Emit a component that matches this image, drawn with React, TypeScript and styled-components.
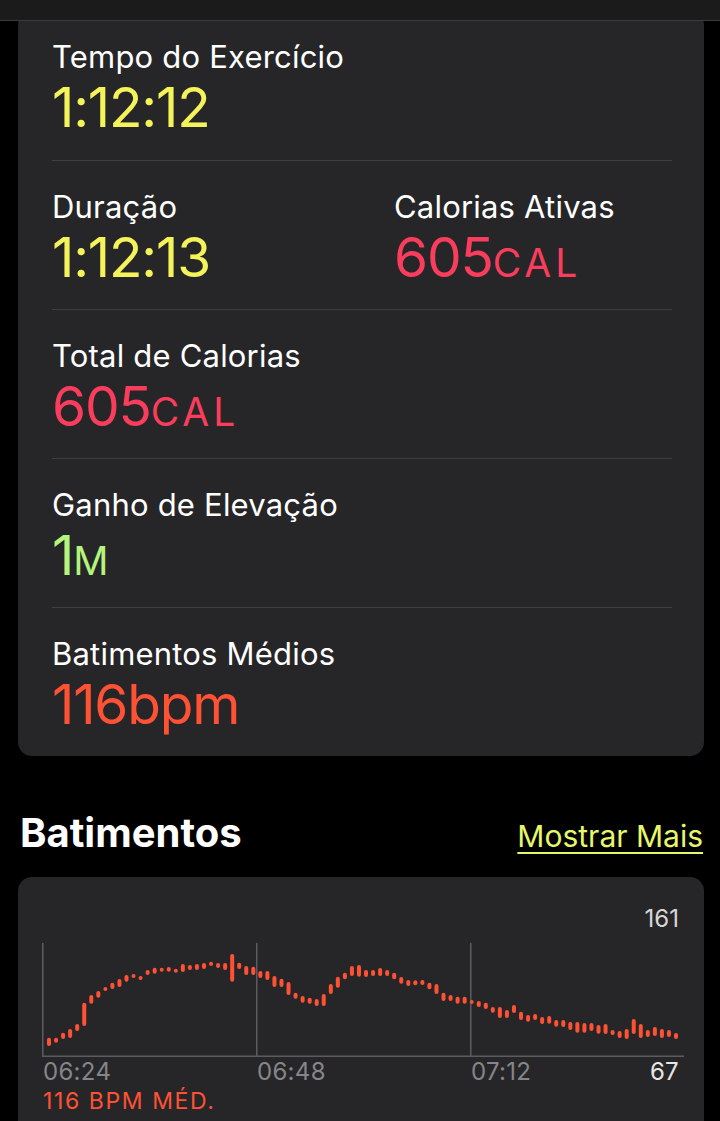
import styled, {createGlobalStyle} from 'styled-components';

const GlobalStyle = createGlobalStyle`
  body {
    margin: 0;
    background: #000;
    font-family: 'Inter', 'Liberation Sans', sans-serif;
    color: #fff;
  }
`;

const Page = styled.div`
  width: 720px;
  min-height: 1121px;
  padding-top: 11px;
  box-sizing: border-box;
  overflow: hidden;
`;

const NavBar = styled.div`
  position: fixed;
  top: 0;
  left: 0;
  width: 720px;
  height: 20px;
  background: #1b1b1c;
  border-bottom: 1px solid #3a3a3c;
  z-index: 2;
`;

const Card = styled.div`
  margin: 0 16px 0 18px;
  background: #262628;
  border-radius: 14px;
`;

const SummaryCard = styled(Card)`
  padding: 0 32px 0 34px;
`;

const Row = styled.div<{$first?: boolean}>`
  height: 149px;
  box-sizing: border-box;
  border-top: ${p => (p.$first ? 'none' : '1px solid #3e3e41')};
  display: grid;
  grid-template-columns: 342px 1fr;
  align-content: start;
  padding-top: 27px;
`;

const Metric = styled.div`
  display: flex;
  flex-direction: column;
`;

const Label = styled.div`
  font-size: 31px;
  line-height: 38px;
  letter-spacing: 0.2px;
  color: #fff;
`;

const Value = styled.div<{$color: string}>`
  font-size: 55px;
  line-height: 62px;
  letter-spacing: -1.2px;
  color: ${p => p.$color};
`;

const Unit = styled.span`
  font-size: 39px;
  letter-spacing: 4px;
`;

const SectionHeader = styled.div`
  display: flex;
  justify-content: space-between;
  align-items: baseline;
  padding: 52px 17px 0 20px;
  height: 121px;
  box-sizing: border-box;
`;

const SectionTitle = styled.h2`
  margin: 0;
  font-size: 40px;
  font-weight: 700;
  letter-spacing: 0;
`;

const MoreLink = styled.a`
  font-size: 30px;
  color: #e6f76c;
  text-decoration: underline;
  text-underline-offset: 5px;
  text-decoration-thickness: 2px;
`;

const ChartCard = styled(Card)`
  padding: 27px 25px 20px 24px;
`;

const MaxLabel = styled.div`
  text-align: right;
  font-size: 24px;
  line-height: 30px;
  color: #d6d6d8;
  margin-bottom: 9px;
`;

const Chart = styled.svg`
  display: block;
`;

const AxisRow = styled.div`
  display: grid;
  grid-template-columns: 214px 214px 1fr auto;
  font-size: 24px;
  line-height: 28px;
`;

const AxisTick = styled.span<{$light?: boolean}>`
  color: ${p => (p.$light ? '#e6e6e8' : '#85858a')};
  padding-left: 1px;
  letter-spacing: 0.3px;
`;

const Average = styled.div`
  font-size: 23px;
  line-height: 30px;
  letter-spacing: 1.6px;
  color: #ff5234;
  padding-left: 1px;
`;

const bars: [number, number][] = [
  [1036.7, 1045], [1036.7, 1041.7], [1031.7, 1038], [1028, 1037], [1023, 1030],
  [1001.7, 1025], [994, 1002.7], [990, 996.7], [986, 990], [981.7, 988],
  [978, 986], [974, 980.7], [973, 977], [975, 977.7], [969, 974],
  [966.7, 972.7], [966.7, 970.7], [966, 970.7], [967.7, 971.7], [963, 971],
  [964, 969], [963, 969], [962, 968], [960.7, 965], [962, 967],
  [962, 969], [953, 980.7], [961.7, 968], [965, 974], [965.7, 974],
  [970, 977], [970, 979], [975, 986], [977.7, 986], [981, 994],
  [991.7, 997.7], [995, 1001.7], [996.7, 1002.7], [998, 1005], [993, 1005],
  [983, 993], [975.7, 986.7], [971.7, 978.3], [965, 975], [964, 975.7],
  [969, 976], [969, 975], [967, 975], [969, 975], [971.7, 978.3],
  [976, 982.7], [979, 985], [979.3, 984.3], [979, 984], [981.7, 988.3],
  [983, 993], [991.7, 1000], [994, 1000], [995.7, 1002.7], [995.7, 1002.7],
  [999, 1003], [1000, 1006], [1001.7, 1008], [1006, 1011.7], [1006, 1017],
  [1009, 1017], [1004, 1012], [1010.7, 1019], [1014, 1020.7], [1013, 1019],
  [1016, 1023], [1015, 1022.7], [1019, 1025.7], [1019, 1026], [1021, 1029],
  [1021, 1031.7], [1022, 1031.7], [1022, 1030], [1024, 1032.7], [1023, 1033],
  [1029, 1034], [1030, 1037], [1028, 1038], [1018, 1033], [1023, 1037],
  [1029, 1036], [1026, 1035], [1028, 1037], [1029, 1036], [1032, 1038],
];

// chart origin in page coordinates
const OX = 42;
const OY = 942;

function HeartChart() {
  return (
    <Chart width={642} height={115} viewBox="0 0 642 115">
      <g stroke="#5c5c60" strokeWidth={1.5}>
        <line x1={0.75} y1={0} x2={0.75} y2={113} />
        <line x1={214.75} y1={0} x2={214.75} y2={113} />
        <line x1={428.75} y1={0} x2={428.75} y2={113} />
        <line x1={0} y1={113.25} x2={642} y2={113.25} />
      </g>
      <g fill="#ff5234">
        {bars.map(([top, bottom], i) => {
          const x = 49 + i * 7.045 - OX - 2;
          return (
            <rect
              key={i}
              x={x}
              y={top - OY}
              width={4}
              height={Math.max(bottom - top, 4)}
              rx={2}
            />
          );
        })}
      </g>
    </Chart>
  );
}

export default function App() {
  return (
    <Page>
      <GlobalStyle />
      <NavBar />
      <SummaryCard>
        <Row $first>
          <Metric>
            <Label>Tempo do Exercício</Label>
            <Value $color="#f4f45a">1:12:12</Value>
          </Metric>
        </Row>
        <Row>
          <Metric>
            <Label>Duração</Label>
            <Value $color="#f4f45a">1:12:13</Value>
          </Metric>
          <Metric>
            <Label>Calorias Ativas</Label>
            <Value $color="#fa3d5c">
              605<Unit>CAL</Unit>
            </Value>
          </Metric>
        </Row>
        <Row>
          <Metric>
            <Label>Total de Calorias</Label>
            <Value $color="#fa3d5c">
              605<Unit>CAL</Unit>
            </Value>
          </Metric>
        </Row>
        <Row>
          <Metric>
            <Label>Ganho de Elevação</Label>
            <Value $color="#b4f47c">
              1<Unit>M</Unit>
            </Value>
          </Metric>
        </Row>
        <Row>
          <Metric>
            <Label>Batimentos Médios</Label>
            <Value $color="#ff5234">116bpm</Value>
          </Metric>
        </Row>
      </SummaryCard>

      <SectionHeader>
        <SectionTitle>Batimentos</SectionTitle>
        <MoreLink>Mostrar Mais</MoreLink>
      </SectionHeader>

      <ChartCard>
        <MaxLabel>161</MaxLabel>
        <HeartChart />
        <AxisRow>
          <AxisTick>06:24</AxisTick>
          <AxisTick>06:48</AxisTick>
          <AxisTick>07:12</AxisTick>
          <AxisTick $light>67</AxisTick>
        </AxisRow>
        <Average>116 BPM MÉD.</Average>
      </ChartCard>
    </Page>
  );
}
